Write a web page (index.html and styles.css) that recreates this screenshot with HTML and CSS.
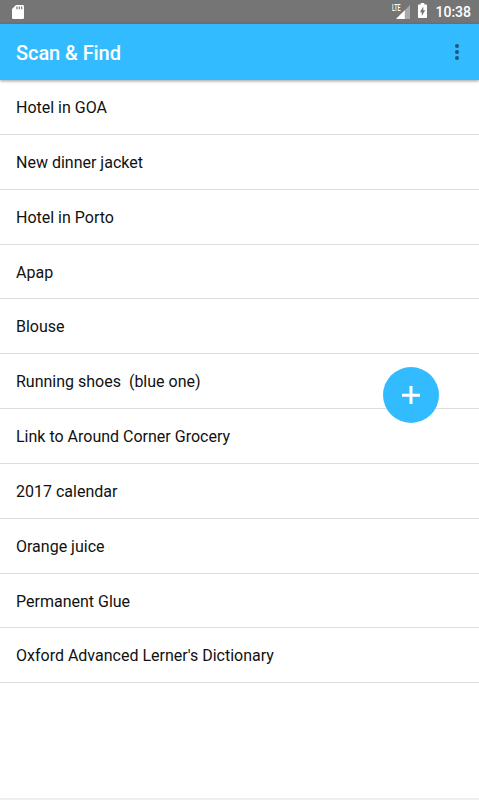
FILE: index.html
```html
<!DOCTYPE html>
<html lang="en">
<head>
<meta charset="utf-8">
<title>Scan &amp; Find</title>
<link rel="stylesheet" href="styles.css">
</head>
<body>
<div class="screen">
  <div class="status-bar">
    <svg class="sd-card" width="12" height="14" viewBox="0 0 12 14">
      <path fill="#fff" d="M4 0h6.800A1.200 1.200 0 0 1 12 1.200v11.600a1.200 1.200 0 0 1-1.200 1.200H1.200A1.200 1.200 0 0 1 0 12.800V4z"/>
      <path fill="#757575" d="M4.300 1.500h1.200v2.700H4.300zM6.700 1.500h1.200v2.700H6.700zM9.100 1.500h1.200v2.700H9.100z"/>
    </svg>
    <div class="indicators">
      <div class="signal">
        <span class="network">LTE</span>
        <svg width="14" height="14" viewBox="0 0 14 14">
          <path fill="#a9a9a9" d="M14 0v14H0z"/>
          <path fill="#fff" d="M8.800 5.200V14H0z"/>
        </svg>
      </div>
      <svg class="battery" width="9" height="15" viewBox="0 0 9 15">
        <path fill="#fff" d="M2.700 0h3.600v1.500H8.200a.8.8 0 0 1 .8.800v11.900a.8.8 0 0 1-.8.800H.8a.8.8 0 0 1-.8-.8V2.300a.8.8 0 0 1 .8-.8h1.900z"/>
        <path fill="#757575" d="M5.300 3.500v3.800h1.900L3.800 13V9.200H1.900z"/>
      </svg>
      <span class="clock">10:38</span>
    </div>
  </div>
  <header class="toolbar">
    <h1>Scan &amp; Find</h1>
    <svg class="overflow" width="4" height="16" viewBox="0 0 4 16">
      <circle cx="2" cy="2" r="2"/><circle cx="2" cy="8" r="2"/><circle cx="2" cy="14" r="2"/>
    </svg>
  </header>
  <ul class="items">
    <li>Hotel in GOA</li>
    <li>New dinner jacket</li>
    <li>Hotel in Porto</li>
    <li>Apap</li>
    <li>Blouse</li>
    <li>Running shoes  (blue one)</li>
    <li>Link to Around Corner Grocery</li>
    <li>2017 calendar</li>
    <li>Orange juice</li>
    <li>Permanent Glue</li>
    <li>Oxford Advanced Lerner's Dictionary</li>
  </ul>
  <div class="bottom-edge"></div>
  <button class="fab" aria-label="Add">
    <svg width="18" height="18" viewBox="0 0 18 18"><path fill="#fff" d="M7.500 0h3v7.700H18v3h-7.500V18h-3v-7.300H0v-3h7.500z"/></svg>
  </button>
</div>
</body>
</html>
```
FILE: styles.css
```css
* { box-sizing: border-box; }

body {
  margin: 0;
  background: #fff;
  font-family: Roboto, "Liberation Sans", sans-serif;
}

.screen {
  position: relative;
  display: flex;
  flex-direction: column;
  width: 479px;
  height: 800px;
  overflow: hidden;
}

.status-bar {
  display: flex;
  flex: none;
  justify-content: space-between;
  height: 24px;
  padding: 0 8px 0 12px;
  background: #757575;
}

.sd-card { margin-top: 5px; }

.indicators { display: flex; }

.signal {
  position: relative;
  width: 18px;
  height: 14px;
  margin: 5px 8px 0 0;
}

.signal svg {
  display: block;
  margin-left: 4px;
}

.network {
  position: absolute;
  top: -1px;
  left: 0;
  color: #fff;
  font-size: 9px;
  font-weight: 500;
  line-height: 8px;
  transform: scaleX(0.6);
  transform-origin: left;
}

.battery { margin: 3px 8px 0 0; }

.clock {
  color: #fff;
  font-size: 14px;
  font-weight: 500;
  line-height: 25px;
}

.toolbar {
  position: relative;
  display: flex;
  flex: none;
  align-items: center;
  justify-content: space-between;
  height: 56px;
  padding: 0 20px 0 16px;
  background: #33bbff;
  box-shadow: 0 1px 3px rgba(0, 0, 0, 0.4);
}

.toolbar h1 {
  margin: 2px 0 0;
  color: #fff;
  font-size: 20px;
  font-weight: 500;
  line-height: 24px;
  letter-spacing: -0.080px;
}

.overflow { fill: #1f5878; }

.items {
  flex: 1;
  margin: 0;
  padding: 0;
  list-style: none;
}

.items li {
  height: 54.850px;
  padding-left: 16px;
  border-bottom: 1px solid #dedede;
  color: #111;
  font-size: 16px;
  line-height: 55px;
  white-space: pre;
}

.bottom-edge {
  flex: none;
  height: 2px;
  background: #eee;
}

.fab {
  position: absolute;
  top: 367px;
  left: 383px;
  display: flex;
  align-items: center;
  justify-content: center;
  width: 56px;
  height: 56px;
  padding: 0;
  border: 0;
  border-radius: 50%;
  background: #33bbff;
}
```
